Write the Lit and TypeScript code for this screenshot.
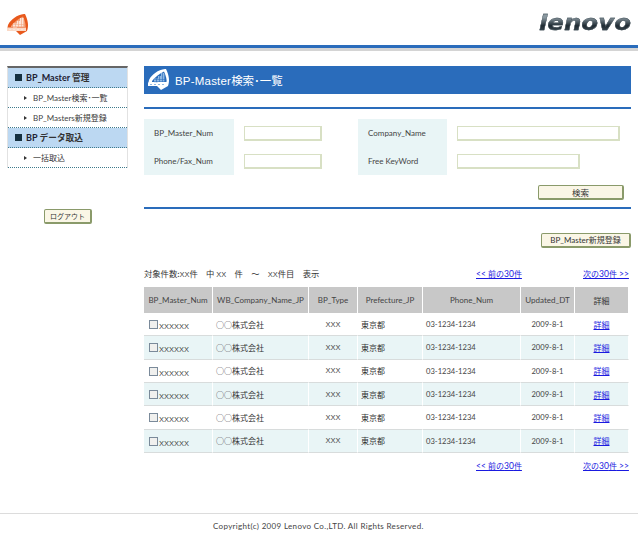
import { LitElement, css, html, svg } from "lit";
import { customElement } from "lit/decorators.js";

const COLUMNS = [
  { label: html`BP_Master_Num`, cls: "c-num" },
  { label: html`WB_Company_Name_JP`, cls: "c-company" },
  { label: html`BP_Type`, cls: "c-type" },
  { label: html`Prefecture_JP`, cls: "c-pref" },
  { label: html`Phone_Num`, cls: "c-phone" },
  { label: html`Updated_DT`, cls: "c-date" },
  { label: html`<span class="jp">詳細</span>`, cls: "c-link" }
];

const ROW_COUNT = [0, 1, 2, 3, 4, 5];

// the same fin-shaped building mark is used in the header and in the title bar
function logoMark(cls: string, main: string, inner: string, block: string, band: string) {
  return svg`
    <svg class="${cls}" viewBox="0 0 24 24" width="24" height="24">
      <path d="M3 12 C6 6 12 2 19 1 L20 1 C23 7 24 13 22 18 L15 22 L11 18 L2 17 Z" fill="${main}" />
      <path d="M6 13 C9 9 13 6 18 3.5 C20 8 21 12 20.5 14 H6 Z" fill="${inner}" />
      <path d="M8 10.5 h4 v4 h-4 z M12 8 h3 v6 h-3 z M15 5 h4 v9 h-4 z" fill="${block}" />
      <path d="M8 11.5 h11 v.6 h-11 z M8 13 h11 v.6 h-11 z M13 8 h.6 v6 h-.6 z M16 5 h.6 v9 h-.6 z M18 5 h.6 v9 h-.6 z M10 10.5 h.6 v4 h-.6 z" fill="${inner}" />
      <path d="M2 14.5 H21 V18 H2 Z" fill="${band}" />
      <path d="M4 16 h2 v1 h-2 z M8 16 h2 v1 h-2 z M12 16 h2 v1 h-2 z M16 16 h2 v1 h-2 z" fill="${block}" />
    </svg>
  `;
}

@customElement("app-root")
export class AppRoot extends LitElement {
  static override styles = css`
    :host {
      display: block;
      width: 638px;
      height: 547px;
      background: #fff;
      color: #444;
      font-family: Lato, "Noto Sans CJK JP", sans-serif;
      font-size: 8px;
      overflow: hidden;
    }

    .jp {
      font-family: "Noto Sans CJK JP", sans-serif;
      font-size: 8px;
      letter-spacing: 0;
      color: #333;
    }

    a .jp,
    a.jp {
      color: inherit;
    }

    td a.jp {
      color: #1a1ae0;
    }

    .small {
      font-family: "Liberation Sans", sans-serif;
      font-size: 7.5px;
      letter-spacing: 0;
    }

    .digits {
      font-size: 7.6px;
    }

    .header {
      height: 45px;
      display: flex;
      justify-content: space-between;
      align-items: flex-start;
      padding: 0 7px 0 5px;
      border-bottom: 3px solid #2a6cbb;
    }

    .header-rule {
      height: 3px;
      background: #d4d4d4;
    }

    .corner-logo {
      margin-top: 13px;
    }

    .lenovo {
      margin-top: 9px;
      font: italic bold 21px/28px "DejaVu Sans", sans-serif;
      transform: scaleX(1.165);
      transform-origin: right center;
      background: linear-gradient(#8a98a0 30%, #1f2b33 60%, #5c6a72);
      -webkit-background-clip: text;
      background-clip: text;
      color: transparent;
      -webkit-text-stroke: 0.3px #3a4850;
    }

    .body {
      display: flex;
      padding: 15px 7px 0 7px;
      height: 462px;
      box-sizing: border-box;
    }

    .side {
      width: 121px;
      flex: none;
    }

    .menu {
      border-top: 2px solid #666;
      border-left: 1px solid #e2e2e2;
      border-right: 1px solid #e2e2e2;
    }

    .menu-head {
      height: 19px;
      background: #bcd8f2;
      border-bottom: 1px dotted #3f7a8c;
      padding-left: 7px;
      font-size: 9px;
      font-weight: bold;
      color: #223;
      display: flex;
      align-items: center;
      gap: 4px;
      white-space: nowrap;
    }

    .menu-head .jp {
      font-size: 8.7px;
      margin-left: 2px;
    }

    .menu-head i {
      width: 7px;
      height: 7px;
      background: #153040;
    }

    .menu-item {
      height: 19px;
      border-bottom: 1px dotted #3f7a8c;
      padding-left: 16px;
      display: flex;
      align-items: center;
      gap: 6px;
      white-space: nowrap;
    }

    .menu-item i {
      border-left: 3px solid #333;
      border-top: 2px solid transparent;
      border-bottom: 2px solid transparent;
    }

    .logout-wrap {
      margin-top: 41px;
      padding-left: 37px;
    }

    .btn {
      display: block;
      box-sizing: border-box;
      height: 15px;
      padding: 0;
      border: 1px solid #8a9a6a;
      border-right-width: 2px;
      border-bottom-width: 2px;
      border-radius: 2px;
      background: #faf6e6;
      color: #333;
      font: inherit;
      line-height: 12px;
      text-align: center;
      white-space: nowrap;
    }

    .btn-logout {
      width: 48px;
    }

    .btn-logout .jp {
      font-size: 7px;
    }

    .btn-search .jp {
      font-size: 8.5px;
    }

    .main {
      margin-left: 16px;
      width: 487px;
      flex: none;
    }

    .title-bar {
      height: 28px;
      background: #2a6cbb;
      color: #fff;
      display: flex;
      align-items: center;
      gap: 5px;
      padding-left: 2px;
      font-family: "Liberation Sans", sans-serif;
      font-size: 11.5px;
      letter-spacing: 0.2px;
      white-space: nowrap;
    }

    .title-bar .jp {
      font-size: 11.5px;
      color: #fff;
    }

    .rule {
      height: 2px;
      background: #2a6cbb;
    }

    .rule-top {
      margin-top: 13px;
    }

    .search {
      margin-top: 10px;
      height: 56px;
      display: flex;
    }

    .label-cell {
      background: #e9f5f6;
      display: grid;
      grid-auto-rows: 28px;
      align-items: center;
      padding-left: 10px;
      box-sizing: border-box;
    }

    .label-left {
      width: 90px;
    }

    .label-right {
      width: 89px;
      margin-left: 36px;
    }

    .field-cell {
      display: grid;
      grid-auto-rows: 28px;
      align-items: center;
      padding-left: 10px;
    }

    .input {
      display: block;
      box-sizing: border-box;
      height: 15px;
      border: 1px solid #d8e0c4;
      border-right-width: 2px;
      border-bottom-width: 2px;
      background: #fff;
    }

    .w-77 {
      width: 78px;
    }

    .w-163 {
      width: 163px;
    }

    .w-123 {
      width: 123px;
    }

    .search-actions {
      margin-top: 10px;
      height: 22px;
      padding-left: 394px;
    }

    .btn-search {
      width: 86px;
    }

    .new-row {
      margin-top: 24px;
      display: flex;
      justify-content: flex-end;
    }

    .btn-new {
      width: 90px;
    }

    .pager {
      display: flex;
      align-items: center;
      height: 12px;
      margin-top: 19px;
      white-space: nowrap;
    }

    .pager-bottom {
      margin-top: 6px;
    }

    .pager-info {
      width: 332px;
      flex: none;
      white-space: pre;
    }

    .pager-info .jp {
      font-size: 8.3px;
    }

    .pager a {
      color: #1a1ae0;
      text-decoration: underline;
      font-size: 8.5px;
    }

    .pager-prev {
      width: 107px;
      flex: none;
    }

    table {
      border-collapse: separate;
      border-spacing: 0;
      table-layout: fixed;
      width: 485px;
      height: 166px;
      margin-top: 8px;
    }

    th {
      height: 26px;
      padding: 0;
      background: #c8c8c8;
      border-right: 1px solid #fff;
      box-sizing: border-box;
      font-weight: normal;
      text-align: center;
      white-space: nowrap;
    }

    td {
      height: 23px;
      padding: 0;
      border-bottom: 1px solid #d8dcdc;
      border-right: 1px solid #fff;
      box-sizing: border-box;
      white-space: nowrap;
    }

    tr.alt td {
      background: #e9f5f6;
    }

    .c-num {
      width: 69px;
    }

    .c-company {
      width: 96px;
    }

    .c-type {
      width: 49px;
    }

    .c-pref {
      width: 65px;
    }

    .c-phone {
      width: 98px;
    }

    .c-date {
      width: 54px;
    }

    .c-link {
      width: 54px;
    }

    td.left {
      padding-left: 3px;
    }

    .center {
      text-align: center;
    }

    td a {
      color: #1a1ae0;
      text-decoration: underline;
    }

    .num-cell {
      display: flex;
      align-items: center;
      padding-left: 5px;
      gap: 1px;
    }

    .num-cell .small {
      margin-top: 5px;
    }

    .check {
      width: 7px;
      height: 7px;
      margin-top: 1px;
      border: 1px solid #7a8a9a;
      background: #f0f0ee;
    }

    .footer {
      border-top: 1px solid #dcdcdc;
      height: 33px;
      box-sizing: border-box;
      padding: 6px 0 0 213px;
      line-height: 12px;
      letter-spacing: 0.33px;
      white-space: nowrap;
    }
  `;

  private renderRow(index: number) {
    return html`
      <tr class="${index % 2 === 1 ? "alt" : ""}">
        <td><div class="num-cell"><span class="check"></span><span class="small">XXXXXX</span></div></td>
        <td class="left jp">○○株式会社</td>
        <td class="center small">XXX</td>
        <td class="left jp">東京都</td>
        <td class="left digits">03-1234-1234</td>
        <td class="center digits">2009-8-1</td>
        <td class="center"><a class="jp" href="#">詳細</a></td>
      </tr>
    `;
  }

  private renderPager(info: unknown, extraClass: string) {
    return html`
      <div class="pager ${extraClass}">
        <span class="pager-info">${info}</span>
        <a class="pager-prev" href="#">&lt;&lt; <span class="jp">前の</span>30<span class="jp">件</span></a>
        <a href="#"><span class="jp">次の</span>30<span class="jp">件</span> &gt;&gt;</a>
      </div>
    `;
  }

  override render() {
    const info = html`<span class="jp">対象件数:</span><span class="small">XX</span><span class="jp">件　中 </span><span class="small">XX</span><span class="jp">　件　～　</span><span class="small">XX</span><span class="jp">件目　表示</span>`;
    return html`
      <div class="header">
        ${logoMark("corner-logo", "#e8591c", "#f3a37c", "#fde6da", "#fbd9c6")}
        <div class="lenovo">lenovo</div>
      </div>
      <div class="header-rule"></div>
      <div class="body">
        <aside class="side">
          <nav class="menu">
            <div class="menu-head"><i></i><span>BP_Master<span class="jp">管理</span></span></div>
            <div class="menu-item"><i></i><span>BP_Master<span class="jp">検索･一覧</span></span></div>
            <div class="menu-item"><i></i><span>BP_Masters<span class="jp">新規登録</span></span></div>
            <div class="menu-head"><i></i><span>BP<span class="jp">データ取込</span></span></div>
            <div class="menu-item"><i></i><span class="jp">一括取込</span></div>
          </nav>
          <div class="logout-wrap">
            <button class="btn btn-logout"><span class="jp">ログアウト</span></button>
          </div>
        </aside>
        <main class="main">
          <div class="title-bar">
            ${logoMark("title-icon", "#ffffff", "#2a6cbb", "#8fb8e4", "#ffffff")}
            <span>BP-Master<span class="jp">検索･一覧</span></span>
          </div>
          <div class="rule rule-top"></div>
          <div class="search">
            <div class="label-cell label-left">
              <span>BP_Master_Num</span>
              <span>Phone/Fax_Num</span>
            </div>
            <div class="field-cell">
              <span class="input w-77"></span>
              <span class="input w-77"></span>
            </div>
            <div class="label-cell label-right">
              <span>Company_Name</span>
              <span>Free KeyWord</span>
            </div>
            <div class="field-cell">
              <span class="input w-163"></span>
              <span class="input w-123"></span>
            </div>
          </div>
          <div class="search-actions">
            <button class="btn btn-search"><span class="jp">検索</span></button>
          </div>
          <div class="rule"></div>
          <div class="new-row">
            <button class="btn btn-new">BP_Master<span class="jp">新規登録</span></button>
          </div>
          ${this.renderPager(info, "")}
          <table>
            <thead>
              <tr>${COLUMNS.map((col) => html`<th class="${col.cls}">${col.label}</th>`)}</tr>
            </thead>
            <tbody>${ROW_COUNT.map((index) => this.renderRow(index))}</tbody>
          </table>
          ${this.renderPager("", "pager-bottom")}
        </main>
      </div>
      <div class="footer">Copyright(c) 2009 Lenovo Co.,LTD. All Rights Reserved.</div>
    `;
  }
}
